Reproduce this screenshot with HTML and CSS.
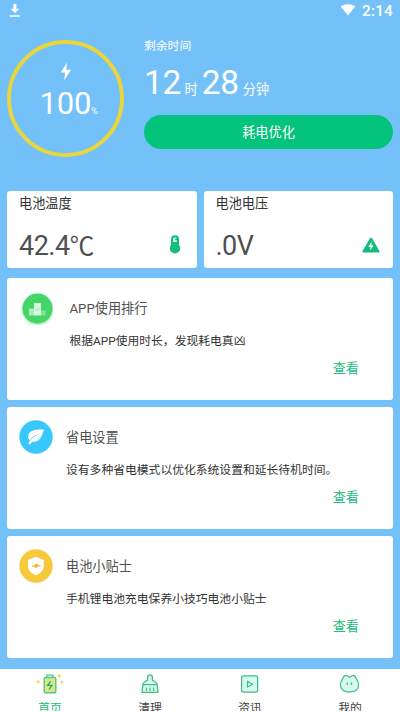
FILE: index.html
```html
<!DOCTYPE html>
<html lang="zh-CN">
<head>
<meta charset="utf-8">
<title>电池管家</title>
<link rel="stylesheet" href="styles.css">
</head>
<body>
<div class="app">
  <header class="status">
    <svg class="download" width="12" height="14" viewBox="0 0 12 14"><path d="M4.4 0h3v4.8h2.8L6 9.2 1.7 4.8h2.7zM.7 11.2h10v1.6H.7z" fill="#fff"/></svg>
    <svg class="wifi" width="16" height="12" viewBox="0 0 16 12"><path d="M.6 2.6Q8-2 15.3 2.6L8 11.6z" fill="#fff"/></svg>
    <span class="clock">2:14</span>
  </header>

  <section class="summary">
    <div class="gauge">
      <svg class="gauge-bolt" width="12" height="19" viewBox="0 0 12 19"><path d="M7 .5.7 10.6H5L4.3 18.2 11 7.7H6.3z" fill="#fff"/></svg>
      <div class="level">100<small>%</small></div>
    </div>
    <div class="remain">
      <div class="remain-label">剩余时间</div>
      <div class="time"><b>12</b><span class="hour">时</span><b>28</b><span class="minute">分钟</span></div>
      <div class="optimize">耗电优化</div>
    </div>
  </section>

  <section class="stats">
    <div class="stat">
      <div class="stat-name">电池温度</div>
      <div class="stat-row">
        <span class="value">42.4<i>℃</i></span>
        <svg class="thermo" width="12" height="20" viewBox="0 0 12 20"><path d="M2 4.2a4 4 0 0 1 8 0V10a5.2 5.2 0 1 1-8 0z" fill="#13be7c"/><path d="M4 7V4.2a2 2 0 0 1 3.8-.7H6.2v1.7h1.7V7z" fill="#d4f5e6"/></svg>
      </div>
    </div>
    <div class="stat">
      <div class="stat-name">电池电压</div>
      <div class="stat-row">
        <span class="value">.0V</span>
        <svg class="volt" width="18" height="16" viewBox="0 0 18 16"><path d="M9 1.6 16.6 14.5H1.4z" fill="#13be7c" stroke="#13be7c" stroke-width="2" stroke-linejoin="round"/><path d="M9.6 4.8 6.3 9.9h2.3L8.2 13.3 11.7 8.4H9.4z" fill="#fff"/></svg>
      </div>
    </div>
  </section>

  <main class="cards">
    <article class="card rank">
      <svg class="badge" width="34" height="34" viewBox="0 0 34 34"><circle class="glow" cx="18.5" cy="17.5" r="15" fill="#44d568"/><path d="M10 17.5h5.3v7H10z" fill="#a9edb7"/><path d="M20.7 19.5h6v5h-6z" fill="#84e39a"/><path d="M15 12h7v12.5h-7z" fill="#d6f7dc"/><path d="m16.5 18 1.6 1.7 2.4-3.2" fill="none" stroke="#a3ddaf"/></svg>
      <div class="text">
        <h2>APP使用排行</h2>
        <p>根据APP使用时长，发现耗电真凶</p>
      </div>
      <a class="more">查看</a>
    </article>
    <article class="card">
      <svg class="badge" width="34" height="34" viewBox="0 0 34 34"><circle cx="17" cy="17" r="16.7" fill="#38c8fd"/><path d="M24.9 9.6C18 9 9.5 9.8 9.2 16.2c0 1.7.5 3.1 1.4 4.1 2.7-3.7 6.2-5.8 10.3-6.3-5.5 2-9.6 5.2-11.3 9.2-.4 1.2 1.5 1.6 2.2.6l1.5-2.3c6.4 1.2 9.1-3 11.6-11.9z" fill="#fff"/></svg>
      <div class="text">
        <h2>省电设置</h2>
        <p>设有多种省电模式以优化系统设置和延长待机时间。</p>
      </div>
      <a class="more">查看</a>
    </article>
    <article class="card">
      <svg class="badge" width="34" height="34" viewBox="0 0 34 34"><circle cx="17" cy="17" r="16.7" fill="#f8c93d"/><path d="m16.8 7.8 7.9 3.1v6.2c0 4.6-3.1 7.2-7.9 9.3-4.8-2.1-7.8-4.7-7.8-9.3v-6.2z" fill="#fff"/><path d="m18.4 14.2-6.6 3.6 3.8-.1.6 1.9 6.4-3.6-3.7.1z" fill="#f8b93d"/></svg>
      <div class="text">
        <h2>电池小贴士</h2>
        <p>手机锂电池充电保养小技巧电池小贴士</p>
      </div>
      <a class="more">查看</a>
    </article>
  </main>

  <nav class="tabs">
    <div class="tab active">
      <svg width="28" height="22" viewBox="0 0 28 22"><rect x="8.2" y="4.5" width="11.6" height="15.2" rx="1.2" fill="#d9e884" stroke="#4fc494" stroke-width="1.4"/><path d="M11 4V2.2h6V4" fill="none" stroke="#4fc494" stroke-width="1.3"/><path d="m14.7 8.2-3 4.1h4.2L13 16.5" fill="none" stroke="#2caa6d" stroke-width="1.3"/><path d="M2.2 7v3.6M.4 8.8H4M23.2.9v4M21.2 2.9h4M25.6 7.2v3.2M24 8.8h3.2" stroke="#f4d957" stroke-width="1.2"/></svg>
      <span>首页</span>
    </div>
    <div class="tab">
      <svg width="28" height="22" viewBox="0 0 28 22"><path d="M11.6 7V4.2a2.4 2.4 0 0 1 4.8 0V7c.5 1.2 4.6 1.8 4.7 4.2l.9 8.2H6l.9-8.2C7 8.800 11.100 8.200 11.600 7z" fill="#d7faea" stroke="#43bc8b" stroke-width="1.3" stroke-linejoin="round"/><path d="M7.2 11.6h13.600M10.600 14.600l-.5 3.400M14 14.600v3.400M17.400 14.600l.5 3.400" fill="none" stroke="#43bc8b" stroke-width="1.2"/></svg>
      <span>清理</span>
    </div>
    <div class="tab">
      <svg width="28" height="22" viewBox="0 0 28 22"><rect x="5.600" y="2.800" width="16" height="16.300" rx="1.500" fill="#d7faea" stroke="#43bc8b" stroke-width="1.300"/><path d="M11.500 8.200v5.900l5-2.900z" fill="none" stroke="#43bc8b" stroke-width="1.200" stroke-linejoin="round"/></svg>
      <span>资讯</span>
    </div>
    <div class="tab">
      <svg width="28" height="22" viewBox="0 0 28 22"><path d="M6.600 6C7.200 3.800 8.800 2.300 9.900 2.300c1.300 0 2.200 1 3.600 2.300 1.400-1.300 2.300-2.300 3.600-2.300 1.100 0 2.700 1.500 3.300 3.700 1.600 1.700 2.200 3.600 2.200 5.600 0 4.900-3.600 7.500-9.100 7.500s-9.100-2.600-9.100-7.500c0-2 .6-3.900 2.200-5.600z" fill="#d7faea" stroke="#43bc8b" stroke-width="1.200"/><path d="M11.200 9.400v2.600M15.500 9.400v2.600" stroke="#43bc8b" stroke-width="1.300"/></svg>
      <span>我的</span>
    </div>
  </nav>
</div>
</body>
</html>
```
FILE: styles.css
```css
* { box-sizing: border-box; margin: 0; padding: 0; }

body {
  background: #fff;
  font-family: Roboto, "Noto Sans CJK SC", sans-serif;
  color: #333;
}

.app {
  width: 400px;
  height: 711px;
  display: flex;
  flex-direction: column;
  overflow: hidden;
  background: #73c1f8;
}
.app > * { flex: none; }

.status { height: 22px; display: flex; align-items: flex-start; padding: 4px 7px 0 9px; }
.download { margin-right: auto; }
.wifi { margin-right: 6px; }
.clock { color: #fff; font-size: 15.3px; font-weight: 500; line-height: 15px; letter-spacing: .2px; }

.summary { height: 169px; display: flex; padding: 18px 7px 0; }

.gauge {
  width: 117px;
  height: 117px;
  border: 4px solid #e9d63c;
  border-radius: 50%;
  display: flex;
  flex-direction: column;
  align-items: center;
  padding-top: 18px;
}
.level { color: #fff; font-size: 31px; line-height: 36px; letter-spacing: -.2px; margin: 5px 0 0 6px; white-space: nowrap; }
.level small { font-size: 9px; }

.remain { width: 249px; margin-left: 20px; color: #fff; }
.remain-label { font-size: 11.8px; line-height: 16px; margin-top: -2px; }
.time { height: 40px; margin-top: 9px; display: flex; align-items: baseline; line-height: 40px; font-size: 13.2px; }
.time b { font-size: 33.5px; font-weight: 400; letter-spacing: -.3px; }
.hour { margin: 0 4px 0 3.5px; }
.minute { margin-left: 4px; }
.optimize {
  height: 34px;
  margin-top: 12px;
  border-radius: 17px;
  background: #04c47d;
  font-size: 13.2px;
  line-height: 35px;
  text-align: center;
}

.stats { display: grid; grid-template-columns: 1fr 1fr; gap: 7px; padding: 0 7px; }
.stat { height: 77px; padding: 3px 12px 0; background: #fff; border-radius: 3px; }
.stat-name { font-size: 13.2px; line-height: 20px; }
.stat-row { display: flex; justify-content: space-between; margin-top: 15px; }
.value { font-size: 27px; line-height: 34px; color: #505050; letter-spacing: -.5px; }
.value i { font-style: normal; font-size: 24.5px; }
.thermo { margin: 6px 4px 0 0; }
.volt { margin: 8px 1px 0 0; }

.cards { display: grid; gap: 7px; padding: 10px 7px 11px; }
.card {
  height: 122px;
  display: grid;
  grid-template-columns: 47px 1fr;
  grid-template-rows: 81px 1fr;
  padding: 0 12px;
  background: #fff;
  border-radius: 3px;
}
.card .badge { margin-top: 13px; }
.glow { filter: drop-shadow(0 1px 1.5px #7be596); }
.rank { grid-template-columns: 50.5px 1fr; }
.text { padding-top: 21px; }
.text h2 { font-size: 13.2px; font-weight: 400; line-height: 20px; color: #505050; }
.text p { font-size: 11.8px; line-height: 18px; margin-top: 13px; white-space: nowrap; }
.more { grid-column: 2; justify-self: end; margin-right: 22px; font-size: 13.2px; line-height: 20px; color: #1fbb80; }

.tabs { height: 56px; display: grid; grid-template-columns: repeat(4, 1fr); background: #fff; }
.tab { display: flex; flex-direction: column; align-items: center; padding-top: 4px; font-size: 11.8px; line-height: 18px; color: #444; }
.tab span { margin-top: 4px; }
.active { color: #1fbb80; }
```
